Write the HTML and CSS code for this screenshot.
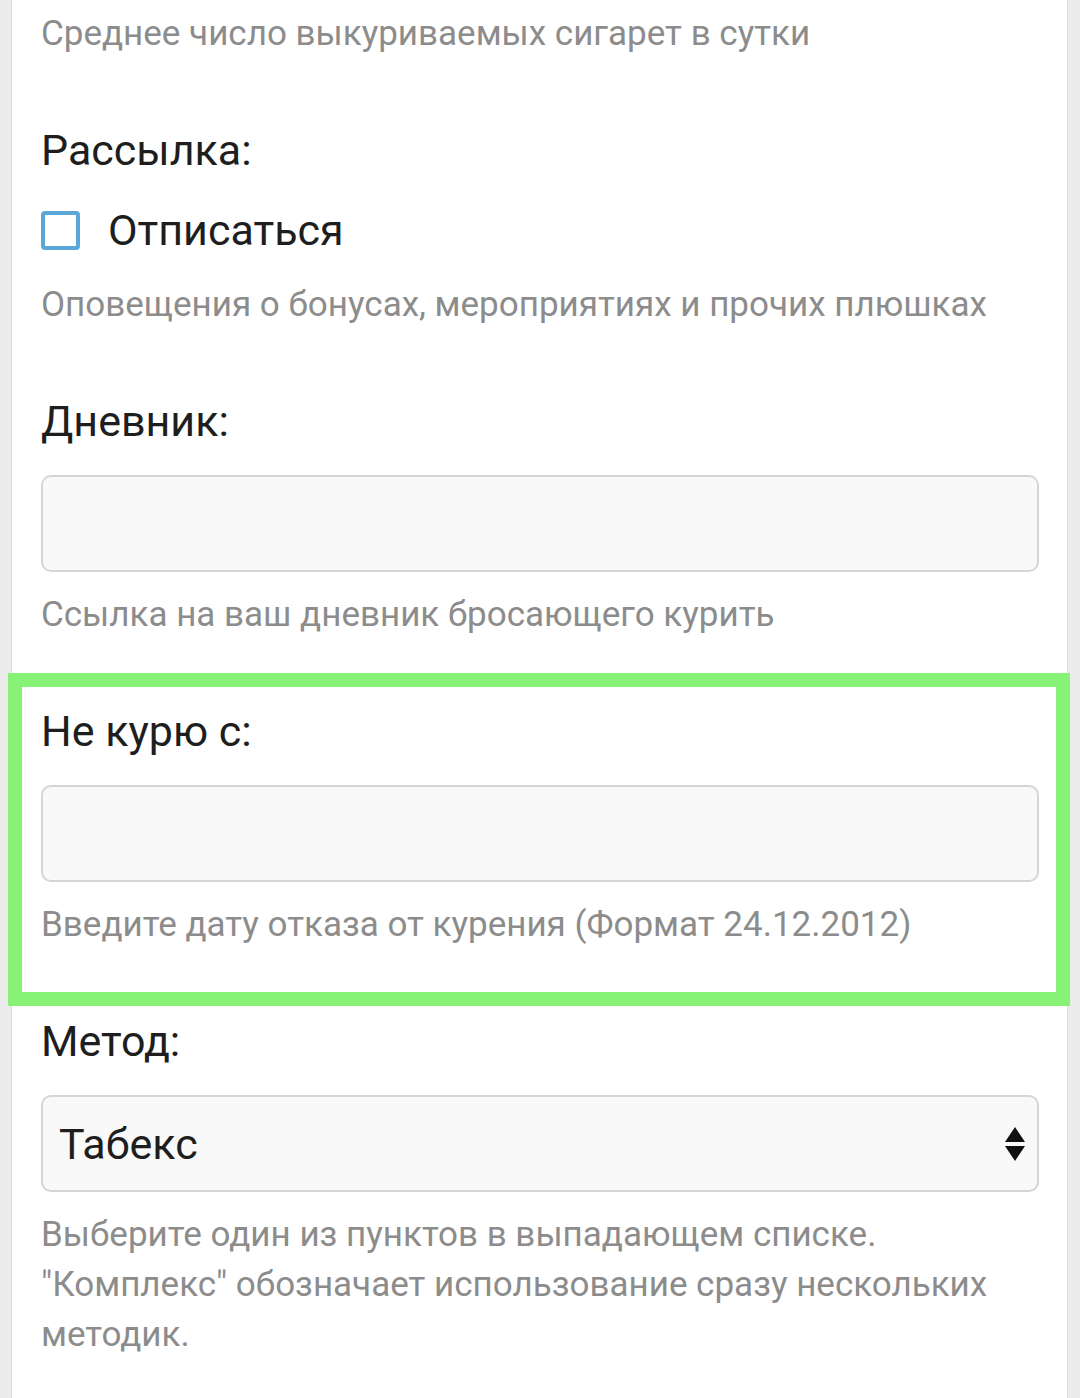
FILE: index.html
```html
<!DOCTYPE html>
<html lang="ru">
<head>
<meta charset="utf-8">
<title>Профиль</title>
<link rel="stylesheet" href="styles.css">
</head>
<body>
<div class="card">
  <p class="help first">Среднее число выкуриваемых сигарет в сутки</p>

  <div class="group">
    <div class="label">Рассылка:</div>
    <label class="check-row">
      <span class="checkbox"></span>
      <span class="check-text">Отписаться</span>
    </label>
    <p class="help after-check">Оповещения о бонусах, мероприятиях и прочих плюшках</p>
  </div>

  <div class="group">
    <div class="label">Дневник:</div>
    <div class="input"></div>
    <p class="help">Ссылка на ваш дневник бросающего курить</p>
  </div>

  <div class="group marked">
    <div class="highlight"></div>
    <div class="label">Не курю с:</div>
    <div class="input"></div>
    <p class="help">Введите дату отказа от курения (Формат 24.12.2012)</p>
  </div>

  <div class="group">
    <div class="label">Метод:</div>
    <div class="input select">
      <span class="select-value">Табекс</span>
      <svg class="arrows" width="20" height="34" viewBox="0 0 20 34">
        <polygon points="10,0 20,15 0,15" fill="#111"/>
        <polygon points="0,19 20,19 10,34" fill="#111"/>
      </svg>
    </div>
    <p class="help">Выберите один из пунктов в выпадающем списке. "Комплекс" обозначает использование сразу нескольких методик.</p>
  </div>
</div>
</body>
</html>
```

FILE: styles.css
```css
html, body {
  margin: 0;
  padding: 0;
}
body {
  background: #ececec;
  font-family: Roboto, "Noto Sans", "Liberation Sans", sans-serif;
  height: 1398px;
  overflow: hidden;
}
.card {
  margin-left: 11px;
  width: 1057px;
  min-height: 1398px;
  background: #fff;
  border-left: 1px solid #dcdcdc;
  border-right: 1px solid #dcdcdc;
  padding: 9px 28px 0 29px;
  box-sizing: border-box;
}
.help {
  margin: 18px 0 0;
  font-size: 35px;
  line-height: 50px;
  color: #8c8c8c;
}
.help.first {
  margin-top: 0;
}
.help.after-check {
  margin-top: 24px;
}
.group {
  margin-top: 65px;
  position: relative;
}
.label {
  font-size: 43px;
  line-height: 52px;
  color: #1e1e1e;
  margin-bottom: 28px;
}
.check-row {
  display: flex;
  align-items: center;
  gap: 28px;
  height: 52px;
  margin-top: 1px;
}
.checkbox {
  width: 39px;
  height: 39px;
  box-sizing: border-box;
  border: 4px solid #5ba6d8;
  border-radius: 4px;
  background: #fff;
}
.check-text {
  font-size: 43px;
  color: #1e1e1e;
}
.input {
  height: 97px;
  box-sizing: border-box;
  border: 2px solid #d5d5d5;
  border-radius: 10px;
  background: #f9f9f9;
}
.select {
  display: flex;
  align-items: center;
  justify-content: space-between;
  padding: 0 12px 0 16px;
}
.select-value {
  font-size: 43px;
  color: #1e1e1e;
}
.arrows {
  display: block;
}
.highlight {
  position: absolute;
  left: -33px;
  right: -31px;
  top: -32px;
  bottom: -56px;
  border: 14px solid #88f277;
  pointer-events: none;
}
```
